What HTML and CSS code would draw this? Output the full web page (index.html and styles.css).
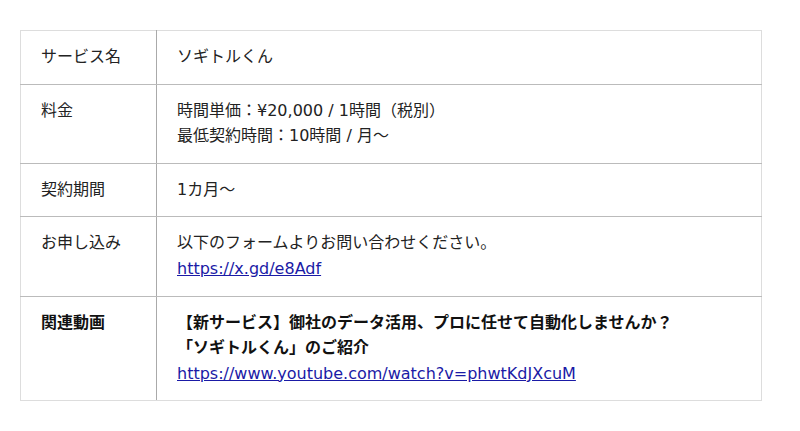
FILE: index.html
```html
<!DOCTYPE html>
<html lang="ja">
<head>
    <meta charset="UTF-8">
    <meta name="viewport" content="width=device-width, initial-scale=1.0">
    <title>ソギトルくん</title>
    <link rel="stylesheet" href="styles.css">
</head>
<body>
    <div class="page">
        <table class="info-table">
            <tr>
                <th>サービス名</th>
                <td>ソギトルくん</td>
            </tr>
            <tr>
                <th>料金</th>
                <td>時間単価：¥20,000 / 1時間（税別）<br>最低契約時間：10時間 / 月〜</td>
            </tr>
            <tr>
                <th>契約期間</th>
                <td>1カ月〜</td>
            </tr>
            <tr>
                <th>お申し込み</th>
                <td>以下のフォームよりお問い合わせください。<br><a href="#">https://x.gd/e8Adf</a></td>
            </tr>
            <tr class="strong-row">
                <th>関連動画</th>
                <td><strong>【新サービス】御社のデータ活用、プロに任せて自動化しませんか？<br>「ソギトルくん」のご紹介</strong><br><a href="#">https://www.youtube.com/watch?v=phwtKdJXcuM</a></td>
            </tr>
        </table>
    </div>
</body>
</html>
```

FILE: styles.css
```css
body {
    margin: 0;
    background-color: #fff;
    color: #222;
    font-family: "DejaVu Sans", "Noto Sans CJK JP", sans-serif;
    font-size: 16px;
}

.page {
    padding: 30px 0 0 20px;
}

.info-table {
    width: 742px;
    border-collapse: collapse;
    border: 1px solid #ddd;
}

.info-table th,
.info-table td {
    padding: 13px 20px 14px;
    line-height: 25.6px;
    text-align: left;
    vertical-align: top;
    border-bottom: 1px solid #bbb;
}

.info-table tr:last-child th,
.info-table tr:last-child td {
    border-bottom: 1px solid #ddd;
}

.info-table th {
    width: 95px;
    font-weight: normal;
    border-right: 1px solid #aaa;
}

.info-table td {
    border-right: 1px solid #ddd;
}

.strong-row th {
    font-weight: bold;
    color: #111;
}

.strong-row strong {
    color: #111;
}

.info-table a {
    color: #1a1aa6;
    text-decoration: underline;
}
```
